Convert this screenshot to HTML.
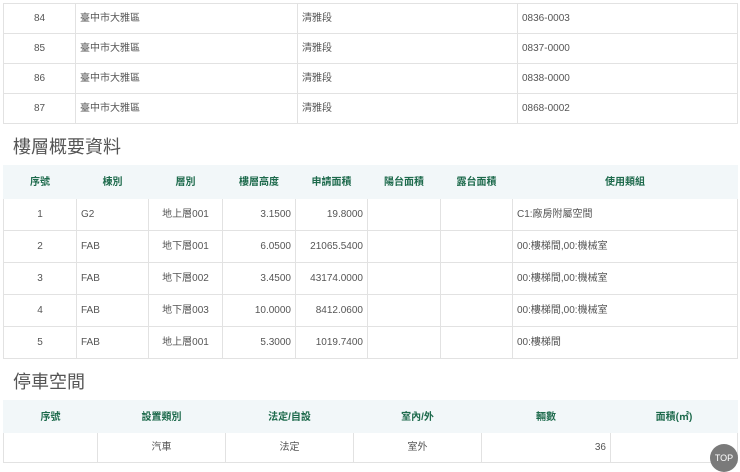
<!DOCTYPE html>
<html><head><style>
body{margin:0;width:740px;height:466px;overflow:hidden;background:#fff;font-family:"Liberation Sans","Noto Sans CJK TC",sans-serif;font-size:10px;color:#555;position:relative}
table{position:absolute;left:3px;width:735px;border-collapse:collapse;table-layout:fixed;font-size:10px}
td,th{border:1px solid #e2e2e2;padding:0 4px;white-space:nowrap;font-size:10px;line-height:12px}
th{background:#f2f7f9;color:#1d6a4c;font-weight:bold;border-color:#f2f7f9;text-align:center;padding-top:2px}
td.c{text-align:center}td.r{text-align:right}
h2{position:absolute;left:13px;margin:0;font-weight:normal;font-size:18px;line-height:22px;color:#555;letter-spacing:0}
.top{position:absolute;left:710px;top:444px;width:28px;height:28px;border-radius:50%;background:#7a7a7a;color:#fff;font-size:9px;text-align:center;line-height:28px}
</style></head><body>
<table style="top:3px">
<colgroup><col style="width:72px"><col style="width:222px"><col style="width:220px"><col></colgroup>
<tr style="height:30px"><td class="c">84</td><td>臺中市大雅區</td><td>清雅段</td><td>0836-0003</td></tr>
<tr style="height:30px"><td class="c">85</td><td>臺中市大雅區</td><td>清雅段</td><td>0837-0000</td></tr>
<tr style="height:30px"><td class="c">86</td><td>臺中市大雅區</td><td>清雅段</td><td>0838-0000</td></tr>
<tr style="height:30px"><td class="c">87</td><td>臺中市大雅區</td><td>清雅段</td><td>0868-0002</td></tr>
</table>
<h2 style="top:136px">樓層概要資料</h2>
<table style="top:165px">
<colgroup><col style="width:73px"><col style="width:72px"><col style="width:74px"><col style="width:73px"><col style="width:72px"><col style="width:73px"><col style="width:72px"><col></colgroup>
<tr style="height:33px"><th>序號</th><th>棟別</th><th>層別</th><th>樓層高度</th><th>申請面積</th><th>陽台面積</th><th>露台面積</th><th>使用類組</th></tr>
<tr style="height:32px"><td class="c">1</td><td>G2</td><td class="c">地上層001</td><td class="r">3.1500</td><td class="r">19.8000</td><td></td><td></td><td>C1:廠房附屬空間</td></tr>
<tr style="height:32px"><td class="c">2</td><td>FAB</td><td class="c">地下層001</td><td class="r">6.0500</td><td class="r">21065.5400</td><td></td><td></td><td>00:樓梯間,00:機械室</td></tr>
<tr style="height:32px"><td class="c">3</td><td>FAB</td><td class="c">地下層002</td><td class="r">3.4500</td><td class="r">43174.0000</td><td></td><td></td><td>00:樓梯間,00:機械室</td></tr>
<tr style="height:32px"><td class="c">4</td><td>FAB</td><td class="c">地下層003</td><td class="r">10.0000</td><td class="r">8412.0600</td><td></td><td></td><td>00:樓梯間,00:機械室</td></tr>
<tr style="height:32px"><td class="c">5</td><td>FAB</td><td class="c">地上層001</td><td class="r">5.3000</td><td class="r">1019.7400</td><td></td><td></td><td>00:樓梯間</td></tr>
</table>
<h2 style="top:371px">停車空間</h2>
<table style="top:400px">
<colgroup><col style="width:94px"><col style="width:128px"><col style="width:128px"><col style="width:128px"><col style="width:129px"><col></colgroup>
<tr style="height:32px"><th>序號</th><th>設置類別</th><th>法定/自設</th><th>室內/外</th><th>輛數</th><th>面積(㎡)</th></tr>
<tr style="height:30px"><td></td><td class="c">汽車</td><td class="c">法定</td><td class="c">室外</td><td class="r">36</td><td></td></tr>
</table>
<div class="top">TOP</div>
</body></html>
